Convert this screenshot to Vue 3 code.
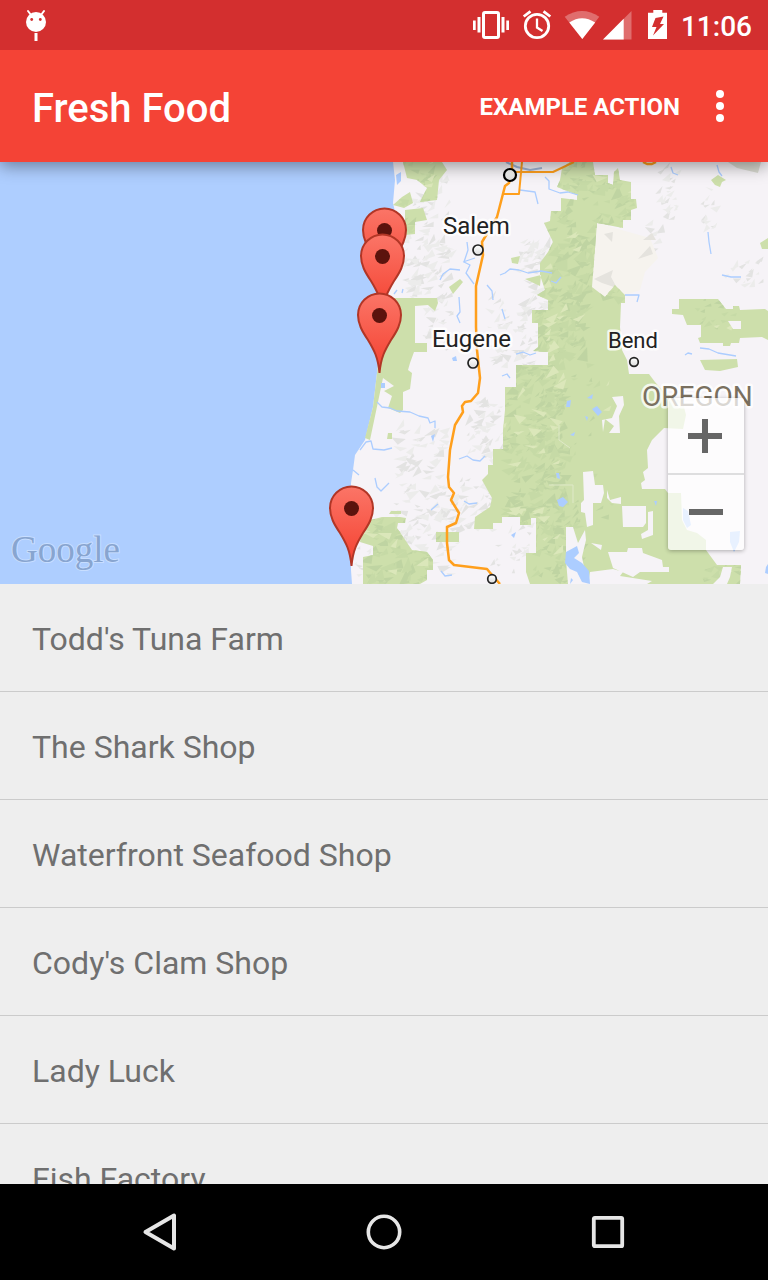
<script setup>
const shops = [
  "Todd's Tuna Farm",
  'The Shark Shop',
  'Waterfront Seafood Shop',
  "Cody's Clam Shop",
  'Lady Luck',
  'Fish Factory',
]

const pins = [
  { x: 384, y: 289 },
  { x: 382, y: 315 },
  { x: 379, y: 374 },
  { x: 351, y: 567 },
]

// Relief shading: small angular facets scattered over each hilly zone.
function facets(zones, seed) {
  let s = seed
  const rnd = () => {
    s = (s * 1664525 + 1013904223) % 4294967296
    return s / 4294967296
  }
  let d = ''
  for (const [x, y, w, h, count, size] of zones) {
    for (let i = 0; i < count; i++) {
      const px = x + rnd() * w
      const py = y + rnd() * h
      const k = size * (0.5 + rnd())
      const a = -1.2 + rnd() * 1.5
      const dx = Math.cos(a) * k
      const dy = Math.sin(a) * k
      const t = 0.2 + rnd() * 0.4
      const m = 0.2 + rnd() * 0.7
      const ox = px + dx * m - dy * t
      const oy = py + dy * m + dx * t
      d += `M${px.toFixed(1)} ${py.toFixed(1)}L${(px + dx).toFixed(1)} ${(py + dy).toFixed(1)}L${ox.toFixed(1)} ${oy.toFixed(1)}Z`
    }
  }
  return d
}

const woods = [
  [535, 162, 95, 135, 95, 12],
  [530, 290, 50, 70, 50, 11],
  [500, 350, 60, 180, 140, 11],
  [530, 510, 45, 74, 30, 10],
  [555, 350, 60, 180, 10, 7],
  [360, 515, 75, 70, 45, 12],
  [395, 162, 50, 70, 18, 9],
  [690, 300, 40, 40, 9, 7],
  [700, 565, 40, 20, 7, 8],
]
const hills = [
  [408, 175, 42, 60, 18, 9],
  [400, 240, 45, 60, 32, 10],
  [420, 300, 30, 50, 10, 9],
  [515, 240, 35, 80, 30, 11],
  [485, 300, 50, 70, 26, 9],
  [465, 400, 35, 60, 20, 9],
  [390, 430, 50, 90, 34, 10],
  [440, 480, 50, 50, 22, 9],
  [395, 515, 60, 60, 24, 10],
  [490, 525, 40, 50, 10, 8],
  [655, 165, 20, 60, 12, 8],
  [700, 180, 12, 60, 7, 8],
  [592, 262, 35, 28, 8, 10],
  [640, 225, 20, 30, 5, 9],
  [720, 260, 40, 30, 8, 8],
  [352, 545, 18, 30, 5, 7],
]
const woodsDark = facets(woods, 71)
const woodsLight = facets(woods, 913)
const woodsPale = facets(woods.map(([x, y, w, h, n, z]) => [x, y, w, h, Math.ceil(n / 6), z]), 401)
const hillsDark = facets(hills, 37)
const hillsLight = facets(hills, 555)
</script>

<template>
  <div class="screen">
    <header class="top">
      <div class="status">
        <svg class="glyph bug" viewBox="24 0 24 50" width="24" height="50" aria-hidden="true">
          <circle cx="36" cy="22" r="10" fill="#fff" />
          <path d="M31 15L28 11M41 15L44 11" stroke="#fff" stroke-width="2" stroke-linecap="round" />
          <circle cx="31.700" cy="19.500" r="1.400" fill="#d32f2f" />
          <circle cx="40.300" cy="19.500" r="1.400" fill="#d32f2f" />
          <path d="M34.500 33h3v8h-3z" fill="#fff" />
        </svg>
        <svg class="glyph" viewBox="472 0 38 50" width="38" height="50" aria-hidden="true">
          <rect x="483.500" y="12.500" width="15" height="25" rx="1.500" fill="none" stroke="#fff" stroke-width="3" />
          <path d="M477.500 17h3v15.500h-3zM473 20.500h2.700v9.500H473zM501.500 17h3v15.500h-3zM506.300 20.500h2.700v9.500h-2.700z" fill="#fff" />
        </svg>
        <svg class="glyph alarm" viewBox="522 0 30 50" width="30" height="50" aria-hidden="true">
          <circle cx="537" cy="26" r="11.700" fill="none" stroke="#fff" stroke-width="2.800" />
          <path d="M537 18.500V27.500L542.500 31" fill="none" stroke="#fff" stroke-width="2.300" />
          <path d="M523.700 16.500L530.500 11.300M550.300 16.500L543.500 11.300" stroke="#fff" stroke-width="2.800" />
        </svg>
        <svg class="glyph wifi" viewBox="564 0 36 50" width="36" height="50" aria-hidden="true">
          <path d="M582.300 39L564.700 16.700Q582 5.500 599.300 16.700Z" fill="#fff" opacity=".3" />
          <path d="M582.300 39L569.300 22.500Q582 14 595.200 22.500Z" fill="#fff" />
        </svg>
        <svg class="glyph" viewBox="602 0 30 50" width="30" height="50" aria-hidden="true">
          <path d="M603 39.500L631.500 11V39.500Z" fill="#fff" opacity=".3" />
          <path d="M603 39.500L623.700 18.800V39.500Z" fill="#fff" />
        </svg>
        <svg class="glyph battery" viewBox="646 0 22 50" width="22" height="50" aria-hidden="true">
          <path d="M648 12.700h5.300V10h9v2.700h4.700V39h-19z" fill="#fff" />
          <path d="M655.500 18L663.500 16.500L660 24H664L653 35.500L656.500 27H652Z" fill="#d32f2f" />
        </svg>
        <time class="clock">11:06</time>
      </div>
      <div class="toolbar">
        <h1 class="title">Fresh Food</h1>
        <button class="action" type="button">EXAMPLE ACTION</button>
        <button class="more" type="button" aria-label="More options">
          <svg viewBox="0 0 48 48" width="48" height="48" aria-hidden="true">
            <circle cx="24" cy="12" r="4" fill="#fff" />
            <circle cx="24" cy="24" r="4" fill="#fff" />
            <circle cx="24" cy="36" r="4" fill="#fff" />
          </svg>
        </button>
      </div>
    </header>

    <section class="map" aria-label="Map">
      <svg class="canvas" viewBox="0 162 768 422">
        <defs>
          <linearGradient id="pin-fill" x1="0" y1="0" x2="0" y2="1">
            <stop offset="0" stop-color="#fb7567" />
            <stop offset="1" stop-color="#f4402f" />
          </linearGradient>
          <linearGradient id="town-fill" x1="0" y1="0" x2="0" y2="1">
            <stop offset="0" stop-color="#fff" />
            <stop offset="1" stop-color="#dcdcdc" />
          </linearGradient>
          <g id="pin">
            <path d="M.500 -1C-1 -17 -5 -24 -11 -34C-17 -43 -21 -50 -21 -59A21.500 21.500 0 0 1 22 -59C22 -50 18 -43 12 -34C6 -24 2 -17 .500 -1Z" fill="url(#pin-fill)" stroke="#b23626" stroke-width="2" />
            <circle cx=".500" cy="-58.500" r="7.500" fill="#5b130d" />
          </g>
          <path id="forest" d="M570 162L562 168L560 180L557 187L577 195V200L561 198V211H551L550 221L544 223L553 242L548 252L540 263V275L545 290L537 295L548 300V310H532V323H538V347L533 351L548 352V365H516V387H505V410L503 430V449H493V465H488V474L482 480L492 498L490 507L475 517L474 529H493V523H502V517H520V525H531V518H536V553H526V572L530 584H740L741 565H717L706 550V540L697 533L687 530L682 520L681 493H668L665 489H642L641 483L645 480L643 472L648 468L647 450L652 440L664 428L683 429L686 415L683 403L664 392L655 382L649 374H629L627 360L622 350L620 327L621 303H625V295L615 285L605 297L592 287L597 223L623 228V220H631V210L637 208L636 199H631V182L620 180L618 168L614 172L613 185L608 183V175H595L593 162Z
            M679 299H718L726 309H733V306H739L740 310L765 309L768 311V340L762 337L740 338L739 343H731L730 346H723V343L700 343L698 338L701 337V325H687L683 315L672 314V309H679Z
            M700 360L737 359L738 367L720 371L705 370ZM760 243L768 238V249H762ZM711 180L718 175L726 180L722 182L720 187L715 185Z
            M403 162H442L447 170L439 180L437 200L420 202L427 188L417 180L407 178ZM393 205L402 197L410 192L413 203L404 208ZM405 210L423 208L427 220L415 222V234L405 235Z
            M388 298H437L438 303L435 311L428 305L415 306V343H427V352H414L410 363L408 370L412 373L410 389L403 392V410L400 413L388 408L392 396L384 391L394 386L383 378L370 440L365 438L373 407L377 373L382 330Z
            M382 517H400L406 518L405 523H398L397 528L412 550L427 552L433 560V570H427V580L420 584H363V557L373 555V546L360 542L363 522Z
            M436 532H459V542H436ZM391 511H401V514H389ZM388 433H392V439H387ZM449 287L460 279L463 282L453 294ZM511 258L520 256L518 264L512 263ZM525 279L541 275L540 286Z" />
          <clipPath id="forest-clip"><use href="#forest" /></clipPath>
          <path id="land" d="M393 162L395 180L393 203L398 225L394 260L388 290L382 330L377 373L373 407L365 440L355 455L353 470L351 483V570L352 584H768V162Z" />
          <clipPath id="land-clip"><use href="#land" /></clipPath>
        </defs>

        <path d="M0 162H768V584H0Z" fill="#aeceff" />
        <use href="#land" fill="#f6f3f7" />
        <g clip-path="url(#land-clip)">
          <path :d="hillsDark" fill="#e3e3e2" />
          <path :d="hillsLight" fill="#ececeb" />
        </g>
        <path d="M728 162L737 168L758 173L761 162Z" fill="#d9dad1" />
        <path d="M597 223L650 238L658 258L645 272L640 290L625 295L615 285L605 297L592 287Z" fill="#f6f3ee" />
        <path d="M604 234L613 232L612 242ZM594 279L613 270L611 277L617 288L602 283ZM638 259L650 246L653 254ZM643 240L652 233L656 240Z" fill="#e5e3de" />

        <use href="#forest" fill="#cddfab" />
        <g clip-path="url(#forest-clip)">
          <path :d="woodsDark" fill="#bfd4a2" />
          <path :d="woodsLight" fill="#c6daa6" />
          <path :d="woodsPale" fill="#dbe7ba" />
        </g>

        <path d="M612 397L623 396L624 405L619 416L620 433L609 433L614 426L605 419L603 432L602 420L612 418L617 406Z
          M583 472L593 471L595 485H603L604 493L601 503H593V525L587 527L585 513L581 512V503L584 500Z
          M622 506H646V523L643 527H623ZM648 512L653 511V535L642 539L641 534L648 530Z
          M607 490L610 500L621 497V504L612 503L607 498Z
          M566 527H573L578 543L585 530L586 540L582 557L584 567L590 584H568L566 560Z
          M608 552H627L628 548H642L643 553L662 560L663 567H669V572H640L633 577L613 568Z
          M590 572L613 569L623 572L620 576L652 581L647 584H588Z
          M713 584L720 577L723 567H732L730 577L727 584ZM591 543L602 545L601 550ZM728 321H741V329H733Z" fill="#f6f3f7" />
        <path d="M549 485H573V503M559 425V440L570 448" fill="none" stroke="#dfe9c8" stroke-width="1" />

        <g fill="#accdff">
          <path d="M557 500L563 497L568 502L563 507L559 506ZM592 409L597 406L602 412L598 416ZM587 398L593 394L592 399ZM567 401L571 400L570 407L566 407ZM570 435L575 432L574 436ZM556 473L559 473L560 479L557 478ZM654 501L657 501L656 506ZM585 416L588 417L587 421Z" />
          <path d="M683 508L688 511L691 525L687 528L683 520ZM730 532L740 531L739 542L734 552L730 542ZM766 567L768 564V574L765 573Z" />
          <path d="M566 552L577 546L579 553L574 558L582 563L589 571L590 584L582 582L577 572L570 569L565 563ZM571 578L573 580L570 584Z" />
          <path d="M396 175L401 172V181L397 185ZM381 383H385V388H381ZM452 358L456 356L457 361L453 361ZM431 436L435 434L433 442ZM511 535L516 532L514 538Z" />
        </g>
        <g fill="none" stroke="#accdff" stroke-width="1.300" stroke-linejoin="round">
          <path d="M520 190L535 192L538 204M545 177L549 181L549 189L560 193L568 192L578 195M440 280L443 274L450 269L460 270M463 262L475 258M467 242L468 250L464 262L470 265L466 273L474 284M500 275L505 273L510 269L519 270L528 273L541 271L552 273M487 285L492 291L493 300M459 297L460 312L457 316L460 323M551 281L556 283L561 277M625 295H639L637 302M671 167L673 173L678 175M717 165L719 172L722 176M708 232L709 242L711 254M722 275L731 277H741M700 348L709 349L718 353L736 356M685 355L688 353L692 354M502 309L505 319M516 354L523 352L530 355L536 353" />
          <path d="M377 402L382 407L390 408L397 411L410 412L419 416L428 418L430 423L435 421V428M360 450L366 442L371 441L373 449L384 450L392 448M375 478L377 487L381 491L389 483M353 470L359 475M459 459L467 456L473 460L480 461L485 456M464 501L469 504L477 503M431 510L438 504M441 571L445 576L452 575M502 376L507 374L510 378M394 294L397 290M402 293L403 289" />
          <path d="M506 162L517 167L530 170L542 168" stroke="#9fb4d6" stroke-width="2" />
        </g>

        <g fill="none" stroke="#ff9f1c" stroke-width="2.500" stroke-linejoin="round">
          <path d="M512 162V172L509 183L505 186L497 217L482 242L483 255L476 286V327L477 350L480 378L478 393L471 401L465 402L462 406L463 412L455 425L450 450L448 477L449 487L454 493L451 500L459 513L456 523L447 527V543L449 560L454 565L487 569L492 575L500 584" />
          <path d="M522 162L519 194H503M512 172H553L574 162" stroke-width="2" />
          <path d="M643 162L647 164H652L656 162" />
        </g>

        <g fill="url(#town-fill)" stroke="#222" stroke-width="1.700">
          <circle cx="510" cy="175" r="6" stroke="#000" stroke-width="2.200" />
          <circle cx="478" cy="250" r="5" />
          <circle cx="473" cy="363" r="5" />
          <circle cx="634" cy="362" r="4.300" />
          <circle cx="492" cy="579" r="4.300" />
        </g>
        <g class="labels">
          <text class="city" x="443" y="234">Salem</text>
          <text class="city" x="432" y="347">Eugene</text>
          <text class="town" x="608" y="348">Bend</text>
          <text class="state" x="642" y="406">OREGON</text>
        </g>
        <text class="brand" x="11" y="562">Google</text>
        <use v-for="(pin, i) in pins" :key="i" href="#pin" :x="pin.x" :y="pin.y" />
      </svg>
      <div class="zoom">
        <button type="button" aria-label="Zoom in">
          <svg viewBox="0 0 36 34" width="36" height="34" aria-hidden="true"><path d="M14 0h6v14h14v6H20v14h-6V20H0v-6h14z" fill="#666" /></svg>
        </button>
        <button type="button" aria-label="Zoom out">
          <svg viewBox="0 0 34 36" width="34" height="36" aria-hidden="true"><path d="M0 14h34v6H0z" fill="#666" /></svg>
        </button>
      </div>
    </section>

    <ul class="shops">
      <li v-for="shop in shops" :key="shop">
        <button class="shop" type="button">{{ shop }}</button>
      </li>
    </ul>

    <nav class="system" aria-label="System">
      <button type="button" aria-label="Back">
        <svg viewBox="0 0 48 48" width="48" height="48" aria-hidden="true"><path d="M9.500 24L38 7.500V40.500Z" fill="none" stroke="#e6e6e6" stroke-width="4" stroke-linejoin="round" /></svg>
      </button>
      <button type="button" aria-label="Home">
        <svg viewBox="0 0 48 48" width="48" height="48" aria-hidden="true"><circle cx="24" cy="24" r="15.700" fill="none" stroke="#e6e6e6" stroke-width="3.600" /></svg>
      </button>
      <button type="button" aria-label="Overview">
        <svg viewBox="0 0 48 48" width="48" height="48" aria-hidden="true"><rect x="9.800" y="9.800" width="28.400" height="28.400" rx="1" fill="none" stroke="#e6e6e6" stroke-width="3.800" /></svg>
      </button>
    </nav>
  </div>
</template>

<style>
body {
  margin: 0;
  background: #eee;
}
</style>

<style scoped>
.screen {
  display: flex;
  flex-direction: column;
  height: 100vh;
  overflow: hidden;
  background: #eee;
  font-family: Roboto, "Liberation Sans", sans-serif;
}
button {
  margin: 0;
  padding: 0;
  border: 0;
  background: none;
  font: inherit;
  color: inherit;
  cursor: pointer;
}
svg {
  display: block;
}
.top {
  position: relative;
  z-index: 1;
  flex: none;
  color: #fff;
  background: #f44336;
  box-shadow: 0 4px 16px rgba(0, 0, 0, 0.4);
}
.status {
  display: flex;
  align-items: center;
  height: 50px;
  padding: 0 16px 0 24px;
  background: #d32f2f;
}
.bug {
  margin-right: auto;
}
.alarm,
.wifi {
  margin-left: 12px;
}
.wifi {
  margin-right: 2px;
}
.battery {
  margin: 0 13px 0 14px;
}
.clock {
  padding-top: 4px;
  font-size: 28px;
  font-weight: 500;
  line-height: 48px;
}
.toolbar {
  display: flex;
  align-items: center;
  height: 112px;
  padding: 0 24px 0 32px;
}
.title {
  flex: 1;
  margin: 0;
  padding-top: 6px;
  font-size: 40px;
  font-weight: 500;
  line-height: 48px;
}
.action {
  height: 48px;
  padding-top: 2px;
  font-size: 24px;
  font-weight: 700;
}
.more {
  margin-left: 16px;
}
.map {
  position: relative;
  flex: none;
}
.canvas {
  width: 100%;
  height: auto;
}
.labels {
  fill: #222;
  stroke: #fff;
  stroke-opacity: 0.8;
  stroke-width: 5px;
  stroke-linejoin: round;
  paint-order: stroke;
}
.city {
  font-size: 24px;
}
.town {
  font-size: 22px;
}
.state {
  font-size: 28px;
  fill: #7a7060;
}
.brand {
  font-family: "Liberation Serif", serif;
  font-size: 37px;
  fill: #88a5d0;
  stroke: #c8deff;
  stroke-width: 2px;
  paint-order: stroke;
}
.zoom {
  position: absolute;
  right: 24px;
  bottom: 34px;
  display: flex;
  flex-direction: column;
  border-radius: 3px;
  background: rgba(255, 255, 255, 0.72);
  box-shadow: 0 1px 4px rgba(0, 0, 0, 0.3);
}
.zoom button {
  display: flex;
  align-items: center;
  justify-content: center;
  width: 76px;
  height: 75px;
}
.zoom button + button {
  border-top: 2px solid #dededf;
  height: 77px;
}
.shops {
  flex: 1;
  min-height: 0;
  margin: 0;
  padding: 0;
  overflow: hidden;
  list-style: none;
}
.shops li {
  border-bottom: 1px solid #cbcbcb;
}
.shop {
  display: block;
  width: 100%;
  padding: 31px 32px 28px;
  font-size: 32px;
  line-height: 48px;
  text-align: left;
  color: #6f6f6f;
}
.system {
  display: flex;
  flex: none;
  height: 96px;
  padding: 0 48px;
  background: #000;
}
.system button {
  display: flex;
  flex: 1;
  align-items: center;
  justify-content: center;
}
</style>
